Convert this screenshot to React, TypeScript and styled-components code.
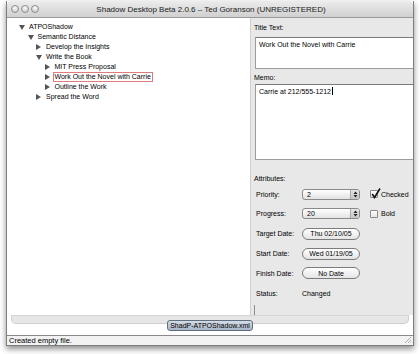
import React from "react";
import styled, { createGlobalStyle } from "styled-components";

const Global = createGlobalStyle`
  html, body { margin: 0; padding: 0; background: #ffffff; }
  body { font-family: "Liberation Sans", Arial, sans-serif; color: #000000; }
  * { box-sizing: border-box; }
`;

const Page = styled.div`
  width: 420px;
  height: 354px;
  padding: 1px 0 0 6px;
`;

const Window = styled.div`
  width: 408px;
  height: 345px;
  display: flex;
  flex-direction: column;
  border: 1px solid #7d7d7d;
  border-top: none;
  background: #ffffff;
  box-shadow: 0 3px 6px rgba(0, 0, 0, 0.45);
  overflow: hidden;
`;

const TitleBar = styled.div`
  height: 17px;
  flex: none;
  display: flex;
  align-items: center;
  background: linear-gradient(#ececec, #d0d0d0);
  border-bottom: 1px solid #9a9a9a;
  border-radius: 4px 4px 0 0;
`;

const Lights = styled.div`
  display: flex;
  gap: 2px;
  padding-left: 4px;
`;

const Light = styled.span`
  width: 8px;
  height: 8px;
  border-radius: 50%;
  border: 1px solid #8e8e8e;
  background: radial-gradient(circle at 50% 30%, #fbfbfb, #c4c4c4);
`;

const Title = styled.div`
  flex: 1;
  text-align: center;
  font-size: 8px;
  color: #1a1a1a;
  padding-right: 30px;
  white-space: nowrap;
`;

const Split = styled.div`
  height: 297px;
  flex: none;
  display: flex;
  padding-left: 1px;
`;

const Outline = styled.div`
  width: 242px;
  background: #ffffff;
  padding: 4px 0 0 11px;
`;

const Row = styled.div<{ $level: number }>`
  height: 10px;
  display: flex;
  align-items: center;
  padding-left: ${(p) => p.$level * 8.5}px;
  font-size: 7px;
  white-space: nowrap;
`;

const Disclosure = styled.span`
  width: 9px;
  display: flex;
  align-items: center;
  flex: none;
`;

const RowText = styled.span<{ $sel?: boolean }>`
  border: 1px solid ${(p) => (p.$sel ? "#e07b7b" : "transparent")};
  padding: 0 1px;
  margin-left: -1px;
  line-height: 8px;
`;

const RightPane = styled.div`
  flex: 1;
  background: #e8e8e8;
  border-left: 1px solid #cfcfcf;
  padding: 5px 0 0 2px;
  overflow: hidden;
  display: flex;
  flex-direction: column;
`;

const FieldLabel = styled.div`
  font-size: 7px;
  height: 10px;
  line-height: 10px;
  padding-left: 1px;
`;

const TextBox = styled.div<{ $h: number; $top: number }>`
  height: ${(p) => p.$h}px;
  margin: ${(p) => p.$top}px -4px 0 2px;
  background: #ffffff;
  border: 1px solid #9c9c9c;
  border-top-color: #7a7a7a;
  font-size: 7px;
  padding: 2px 3px;
  line-height: 9px;
`;

const Caret = styled.span`
  display: inline-block;
  width: 1px;
  height: 8px;
  background: #000;
  vertical-align: -1px;
  margin-left: 1px;
`;

const Gap = styled.div<{ $h: number }>`
  height: ${(p) => p.$h}px;
  flex: none;
`;

const AttrRow = styled.div`
  height: 20px;
  display: grid;
  grid-template-columns: 46px 58px 10px auto;
  align-items: center;
  padding-left: 3px;
  font-size: 7px;
`;

const Popup = styled.div`
  height: 11px;
  border: 1px solid #8a8a8a;
  border-radius: 3px;
  background: linear-gradient(#ffffff, #e2e2e2);
  display: flex;
  align-items: center;
  padding-left: 4px;
  overflow: hidden;
`;

const PopupText = styled.span`
  flex: 1;
  font-size: 7px;
`;

const PopupArrows = styled.span`
  width: 9px;
  height: 100%;
  display: flex;
  align-items: center;
  justify-content: center;
  background: linear-gradient(#e4e4e4, #c6c6c6);
  border-left: 1px solid #aaaaaa;
`;

const Check = styled.div`
  grid-column: 4;
  display: flex;
  align-items: center;
  gap: 3px;
`;

const Box = styled.span`
  width: 8px;
  height: 8px;
  border: 1px solid #8a8a8a;
  background: linear-gradient(#ffffff, #e6e6e6);
  border-radius: 1px;
  position: relative;
`;

const CheckMark = styled.svg`
  position: absolute;
  left: 0;
  top: -3px;
`;

const Pill = styled.div`
  height: 12px;
  border: 1px solid #7c7c7c;
  border-radius: 6px;
  background: linear-gradient(#ffffff, #e4e4e4);
  display: flex;
  align-items: center;
  justify-content: center;
  font-size: 7px;
`;

const Tick = styled.div`
  width: 1px;
  height: 10px;
  background: #8c8c8c;
  margin-left: 1px;
`;

const BottomArea = styled.div`
  height: 20px;
  flex: none;
  display: flex;
  flex-direction: column;
  align-items: center;
`;

const Strip = styled.div`
  height: 9px;
  width: 398px;
  flex: none;
  background: #e6e6e6;
  border: 1px solid #cfcfcf;
  border-top: 1px solid #d6d6d6;
  border-radius: 0 0 5px 5px;
`;

const FileButton = styled.div`
  margin-top: -4px;
  height: 11px;
  width: 86px;
  border: 1px solid #5f6e80;
  border-radius: 3px;
  background: linear-gradient(#d4dce6, #a9b6c6);
  font-size: 7px;
  display: flex;
  align-items: center;
  justify-content: center;
`;

const StatusBar = styled.div`
  height: 10px;
  flex: none;
  border-top: 1px solid #8a8a8a;
  background: #f2f2f2;
  font-size: 7.5px;
  line-height: 9px;
  padding-left: 2px;
  display: flex;
  justify-content: space-between;
`;

const Grip = styled.svg`
  margin-right: 1px;
`;

const Down = () => (
  <svg width="6" height="5" viewBox="0 0 6 5">
    <path d="M0 0 L6 0 L3 5 Z" fill="#555" />
  </svg>
);
const Right = () => (
  <svg width="5" height="6" viewBox="0 0 5 6">
    <path d="M0 0 L5 3 L0 6 Z" fill="#555" />
  </svg>
);

const Arrows = () => (
  <svg width="5" height="7" viewBox="0 0 5 7">
    <path d="M0.5 3 L2.5 0.5 L4.5 3 Z M0.5 4 L2.5 6.5 L4.5 4 Z" fill="#222" />
  </svg>
);

type Node = { level: number; open: boolean; text: string; sel?: boolean };
const nodes: Node[] = [
  { level: 0, open: true, text: "ATPOShadow" },
  { level: 1, open: true, text: "Semantic Distance" },
  { level: 2, open: false, text: "Develop the Insights" },
  { level: 2, open: true, text: "Write the Book" },
  { level: 3, open: false, text: "MIT Press Proposal" },
  { level: 3, open: false, text: "Work Out the Novel with Carrie", sel: true },
  { level: 3, open: false, text: "Outline the Work" },
  { level: 2, open: false, text: "Spread the Word" },
];

export default function App() {
  return (
    <Page>
      <Global />
      <Window>
        <TitleBar>
          <Lights>
            <Light />
            <Light />
            <Light />
          </Lights>
          <Title>Shadow Desktop Beta 2.0.6 – Ted Goranson (UNREGISTERED)</Title>
        </TitleBar>
        <Split>
          <Outline>
            {nodes.map((n) => (
              <Row key={n.text} $level={n.level}>
                <Disclosure>{n.open ? <Down /> : <Right />}</Disclosure>
                <RowText $sel={n.sel}>{n.text}</RowText>
              </Row>
            ))}
          </Outline>
          <RightPane>
            <FieldLabel>Title Text:</FieldLabel>
            <TextBox $h={32} $top={4}>Work Out the Novel with Carrie</TextBox>
            <Gap $h={4} />
            <FieldLabel>Memo:</FieldLabel>
            <TextBox $h={77} $top={1}>
              Carrie at 212/555-1212
              <Caret />
            </TextBox>
            <Gap $h={14} />
            <FieldLabel>Attributes:</FieldLabel>
            <AttrRow>
              <span>Priority:</span>
              <Popup>
                <PopupText>2</PopupText>
                <PopupArrows>
                  <Arrows />
                </PopupArrows>
              </Popup>
              <Check>
                <Box>
                  <CheckMark width="10" height="11" viewBox="0 0 10 11">
                    <path d="M1.2 6 L3.5 9.5 L9 0.5" fill="none" stroke="#111" strokeWidth="1.6" />
                  </CheckMark>
                </Box>
                <span>Checked</span>
              </Check>
            </AttrRow>
            <AttrRow>
              <span>Progress:</span>
              <Popup>
                <PopupText>20</PopupText>
                <PopupArrows>
                  <Arrows />
                </PopupArrows>
              </Popup>
              <Check>
                <Box />
                <span>Bold</span>
              </Check>
            </AttrRow>
            <AttrRow>
              <span>Target Date:</span>
              <Pill>Thu 02/10/05</Pill>
            </AttrRow>
            <AttrRow>
              <span>Start Date:</span>
              <Pill>Wed 01/19/05</Pill>
            </AttrRow>
            <AttrRow>
              <span>Finish Date:</span>
              <Pill>No Date</Pill>
            </AttrRow>
            <AttrRow>
              <span>Status:</span>
              <span>Changed</span>
            </AttrRow>
            <Gap $h={2} />
            <Tick />
          </RightPane>
        </Split>
        <BottomArea>
          <Strip />
          <FileButton>ShadP-ATPOShadow.xml</FileButton>
        </BottomArea>
        <StatusBar>
          <span>Created empty file.</span>
          <Grip width="8" height="8" viewBox="0 0 8 8">
            <path d="M7 1 L1 7 M7 4 L4 7 M7 6.5 L6.5 7" stroke="#9a9a9a" strokeWidth="0.8" />
          </Grip>
        </StatusBar>
      </Window>
    </Page>
  );
}
